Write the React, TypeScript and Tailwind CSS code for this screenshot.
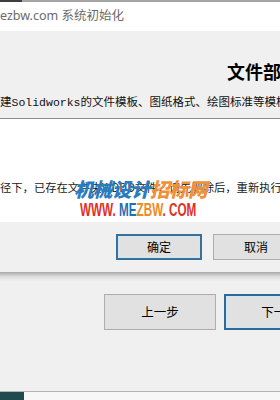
export default function App() {
  return (
    <div className="w-[280px] h-[400px] overflow-hidden bg-[#f0f0f0] flex flex-col font-['Noto_Sans','Noto_Sans_CJK_SC',sans-serif]">
      {/* top edge */}
      <div className="h-[2px] shrink-0 flex">
        <div className="w-[22px] bg-[#3e3e3e]" />
        <div className="flex-1 bg-[#a4a4a4]" />
      </div>

      {/* title bar */}
      <div className="h-[29px] shrink-0 bg-white flex items-center whitespace-nowrap text-[12.5px] text-[#6a6a6a]">
        ezbw.com 系统初始化
      </div>

      {/* wizard header */}
      <div className="h-[87px] shrink-0 pt-[29px] whitespace-nowrap overflow-hidden">
        <div className="pl-[227px] text-[18px] leading-[22px] font-bold text-black font-['Noto_Sans_CJK_SC',sans-serif]">
          文件部署
        </div>
        <div className="mt-[14px] text-[11.5px] leading-[14px] text-[#111] font-['Liberation_Mono','Noto_Sans_CJK_SC',monospace]">
          建Solidworks的文件模板、图纸格式、绘图标准等模板
        </div>
      </div>

      {/* message box */}
      <div className="shrink-0 border-t border-[#8c8c8c]">
        <div className="relative h-[103px] bg-white pt-[61px] whitespace-nowrap overflow-hidden">
          <div className="text-[11.3px] leading-[14px] text-[#1a1a1a] font-['Noto_Sans_CJK_SC',sans-serif]">
            径下，已存在文件夹WDDD文件，请先删除后，重新执行
          </div>
          {/* watermark */}
          <div className="absolute left-[74px] top-[58px] flex flex-col items-start">
            <div className="text-[19.5px] leading-[24px] font-black italic font-['Noto_Sans_CJK_SC',sans-serif] tracking-[-0.5px]">
              <span className="text-[#2a7cc0]">机械设计</span>
              <span className="text-[#f0903a]">招标网</span>
            </div>
            <div className="mt-[2px] ml-[6px] text-[18px] leading-[15px] font-bold font-['Liberation_Sans',sans-serif] scale-x-[0.65] origin-left">
              <span className="text-[#e2301f]">WWW. </span>
              <span className="text-[#1f6fb5]">ME</span>
              <span className="text-[#f08a22]">ZBW</span>
              <span className="text-[#e2301f]">. COM</span>
            </div>
          </div>
        </div>
        <div className="h-[50px] bg-[#f0f0f0] flex items-center pl-[116px] gap-[11px] text-[12px] text-black font-['Noto_Sans_CJK_SC',sans-serif]">
          <button className="w-[86px] h-[26px] shrink-0 bg-[#e1e1e1] border-2 border-[#3a6f98] shadow-[inset_0_0_0_1px_#cde8f8] flex items-center justify-center">
            确定
          </button>
          <button className="w-[86px] h-[26px] shrink-0 bg-[#e1e1e1] border border-[#adadad] flex items-center justify-center">
            取消
          </button>
        </div>
        <div className="h-[9px] bg-gradient-to-b from-[#a8a8a8] via-[#dcdcdc] to-[#f0f0f0]" />
      </div>

      {/* wizard footer */}
      <div className="flex-1 pt-[13px] pl-[104px] flex gap-[8px] text-[12.5px] text-black font-['Noto_Sans_CJK_SC',sans-serif]">
        <button className="w-[112px] h-[36px] shrink-0 bg-[#e1e1e1] border border-[#adadad] flex items-center justify-center">
          上一步
        </button>
        <button className="w-[112px] h-[36px] shrink-0 bg-[#e1e1e1] border-2 border-[#2f6994] shadow-[inset_0_0_0_1px_#cde8f8] flex items-center justify-center">
          下一步
        </button>
      </div>

      {/* bottom edge */}
      <div className="h-[1px] shrink-0 bg-[#b4b4b4]" />
      <div className="h-[8px] shrink-0 flex">
        <div className="w-[24px] bg-[#1f4a4e]" />
        <div className="flex-1 bg-[#f7f7f7]" />
      </div>
    </div>
  );
}
